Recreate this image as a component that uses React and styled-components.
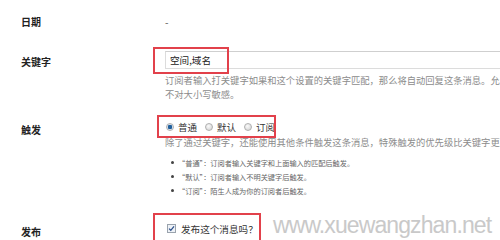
import React from "react";
import styled, { createGlobalStyle } from "styled-components";

const GlobalStyle = createGlobalStyle`
  html, body {
    margin: 0;
    padding: 0;
    background: #fff;
  }
  body {
    font-family: "Noto Sans CJK SC", "Liberation Sans", sans-serif;
    color: #333;
  }
`;

const Page = styled.div`
  position: relative;
  width: 500px;
  height: 240px;
  overflow: hidden;
  padding: 15px 0 0 21px;
  box-sizing: border-box;
`;

const Row = styled.div`
  display: grid;
  grid-template-columns: 144px 1fr;
  align-items: start;
  margin-top: ${(p) => p.$gap || 0}px;
`;

const Label = styled.div`
  font-size: 10px;
  line-height: 14px;
  font-weight: 700;
  color: #222;
  padding-top: ${(p) => p.$offset || 0}px;
`;

const Value = styled.div`
  font-size: 10px;
  line-height: 14px;
  color: #555;
  min-width: 0;
`;

const Field = styled.div`
  position: relative;
`;

const Highlight = styled.span`
  position: absolute;
  left: ${(p) => p.$left}px;
  top: ${(p) => p.$top}px;
  width: ${(p) => p.$width}px;
  height: ${(p) => p.$height}px;
  border: 2px solid #e2414b;
  box-sizing: border-box;
  pointer-events: none;
`;

const TextInput = styled.div`
  height: 18px;
  box-sizing: border-box;
  border: 1px solid #dcdcdc;
  border-top-color: #cfcfcf;
  padding-left: 4px;
  font-size: 9.6px;
  line-height: 16px;
  color: #222;
  width: 400px;
`;

const Help = styled.div`
  font-size: 9.3px;
  line-height: 13.5px;
  color: #8c8c8c;
  white-space: nowrap;
  margin-top: ${(p) => p.$gap || 0}px;
`;

const RadioGroup = styled.div`
  display: flex;
  align-items: center;
  height: 14px;
`;

const RadioItem = styled.label`
  display: flex;
  align-items: center;
  margin-left: ${(p) => p.$first ? 1 : 8}px;
  font-size: 9.5px;
  color: #333;
`;

const RadioDot = styled.span`
  width: 8px;
  height: 8px;
  border-radius: 50%;
  border: 1px solid #b0b0b0;
  background: ${(p) =>
    p.$checked
      ? "radial-gradient(circle, #1f5f9c 0 2px, #d8e2ee 2.5px)"
      : "radial-gradient(circle at 40% 35%, #fafafa, #cfcfcf)"};
  margin-right: 4px;
  box-sizing: border-box;
`;

const Bullets = styled.ul`
  list-style: none;
  margin: 6px 0 0;
  padding: 0 0 0 6px;
`;

const Bullet = styled.li`
  display: flex;
  align-items: center;
  font-size: 7.2px;
  line-height: 14px;
  color: #666;
  white-space: nowrap;
  &::before {
    content: "";
    width: 3px;
    height: 3px;
    border-radius: 50%;
    background: #444;
    margin-right: 4px;
  }
`;

const CheckRow = styled.div`
  display: flex;
  align-items: center;
  height: 14px;
  padding-left: 2px;
  font-size: 9.6px;
  color: #333;
`;

const CheckBox = styled.span`
  width: 9px;
  height: 9px;
  border: 1px solid #9aa3ad;
  box-sizing: border-box;
  background: #eef2f7;
  display: flex;
  align-items: center;
  justify-content: center;
  margin-right: 5px;
  svg {
    width: 7px;
    height: 7px;
  }
`;

const Watermark = styled.div`
  position: absolute;
  left: 273px;
  top: 211px;
  font-family: "Liberation Sans", sans-serif;
  font-size: 23px;
  line-height: 28px;
  letter-spacing: -0.9px;
  color: #c9c9c9;
`;

export default function App() {
  return (
    <Page>
      <GlobalStyle />
      <Row>
        <Label>日期</Label>
        <Value>-</Value>
      </Row>

      <Row $gap={22}>
        <Label $offset={4}>关键字</Label>
        <Value>
          <Field>
            <TextInput>空间,域名</TextInput>
            <Highlight $left={-12} $top={-4} $width={76} $height={27} />
          </Field>
          <Help $gap={5}>订阅者输入打关键字如果和这个设置的关键字匹配，那么将自动回复这条消息。允许多个关键字</Help>
          <Help>不对大小写敏感。</Help>
        </Value>
      </Row>

      <Row $gap={19}>
        <Label $offset={3}>触发</Label>
        <Value>
          <Field>
            <RadioGroup>
              <RadioItem $first>
                <RadioDot $checked />
                普通
              </RadioItem>
              <RadioItem>
                <RadioDot />
                默认
              </RadioItem>
              <RadioItem>
                <RadioDot />
                订阅
              </RadioItem>
            </RadioGroup>
            <Highlight $left={-8} $top={-5} $width={119} $height={23} />
          </Field>
          <Help $gap={2}>除了通过关键字，还能使用其他条件触发这条消息，特殊触发的优先级比关键字更高。</Help>
          <Bullets>
            <Bullet>“普通”：订阅者输入关键字和上面输入的匹配后触发。</Bullet>
            <Bullet>“默认”：订阅者输入不明关键字后触发。</Bullet>
            <Bullet>“订阅”：陌生人成为你的订阅者后触发。</Bullet>
          </Bullets>
        </Value>
      </Row>

      <Row $gap={24}>
        <Label $offset={3}>发布</Label>
        <Value>
          <Field>
            <CheckRow>
              <CheckBox>
                <svg viewBox="0 0 10 10">
                  <path d="M1.5 5.2 L4 7.6 L8.6 2" fill="none" stroke="#2b4f8a" strokeWidth="1.8" />
                </svg>
              </CheckBox>
              发布这个消息吗？
            </CheckRow>
            <Highlight $left={-12} $top={-9} $width={108} $height={32} />
          </Field>
        </Value>
      </Row>

      <Watermark>www.xuewangzhan.net</Watermark>
    </Page>
  );
}
